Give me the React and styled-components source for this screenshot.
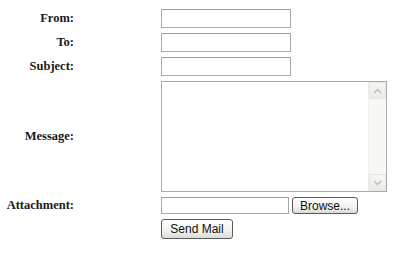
import React from 'react';
import styled, { createGlobalStyle } from 'styled-components';

const GlobalStyle = createGlobalStyle`
  html, body {
    margin: 0;
    padding: 0;
    background: #ffffff;
  }
`;

const Form = styled.form`
  display: grid;
  grid-template-columns: 74px auto;
  column-gap: 87px;
  row-gap: 5px;
  align-items: center;
  align-content: start;
  justify-content: start;
  padding-top: 9px;
  width: 400px;
  height: 267px;
  box-sizing: border-box;
`;

const Label = styled.label`
  font-family: "Liberation Serif", "Times New Roman", serif;
  font-weight: bold;
  font-size: 12.5px;
  color: #1a1a1a;
  text-align: right;
  white-space: nowrap;
`;

const Field = styled.div`
  display: flex;
  align-items: center;
  gap: 3px;
`;

const TextInput = styled.input`
  box-sizing: border-box;
  width: ${({ $w }) => $w || 130}px;
  height: ${({ $h }) => $h || 19}px;
  margin: 0;
  padding: 0 2px;
  border: 1px solid #a9a9a9;
  border-top-color: #9c9c9c;
  background: #fff;
  font-family: "Liberation Sans", Arial, sans-serif;
  font-size: 12px;
  outline: none;
`;

const MessageBox = styled.div`
  box-sizing: border-box;
  width: 226px;
  height: 111px;
  border: 1px solid #a5acb2;
  display: flex;
  background: #fff;
`;

const MessageArea = styled.textarea`
  flex: 1;
  border: none;
  margin: 0;
  padding: 2px;
  resize: none;
  outline: none;
  overflow: hidden;
  font-family: "Liberation Mono", monospace;
  font-size: 12px;
`;

const ScrollBar = styled.div`
  width: 17px;
  display: flex;
  flex-direction: column;
  justify-content: space-between;
  background: #f7f7f3;
  border-left: 1px solid #f0f0ea;
`;

const ArrowBtn = styled.div`
  height: 17px;
  display: flex;
  align-items: center;
  justify-content: center;
  background: linear-gradient(#f6f6f3, #ebebe6);
  border: 1px solid #e6e6e0;
  box-sizing: border-box;
  border-radius: 2px;
`;

const Button = styled.button`
  box-sizing: border-box;
  width: ${({ $w }) => $w}px;
  height: ${({ $h }) => $h}px;
  margin: 0;
  padding: 0;
  border: 1px solid #5a5a5a;
  border-radius: 3px;
  background: linear-gradient(#ffffff, #f2f2ee 60%, #dcdcd6);
  font-family: "Liberation Sans", Arial, sans-serif;
  font-size: 12px;
  color: #111;
  cursor: pointer;
`;

const Chevron = ({ up }) => (
  <svg width="9" height="6" viewBox="0 0 9 6">
    <path
      d={up ? 'M1 5 L4.5 1.5 L8 5' : 'M1 1 L4.5 4.5 L8 1'}
      fill="none"
      stroke="#b8bdb0"
      strokeWidth="1.3"
    />
  </svg>
);

export default function App() {
  return (
    <>
      <GlobalStyle />
      <Form onSubmit={(e) => e.preventDefault()}>
        <Label>From:</Label>
        <Field><TextInput type="text" /></Field>

        <Label>To:</Label>
        <Field><TextInput type="text" /></Field>

        <Label>Subject:</Label>
        <Field><TextInput type="text" /></Field>

        <Label>Message:</Label>
        <Field>
          <MessageBox>
            <MessageArea />
            <ScrollBar>
              <ArrowBtn><Chevron up /></ArrowBtn>
              <ArrowBtn><Chevron /></ArrowBtn>
            </ScrollBar>
          </MessageBox>
        </Field>

        <Label>Attachment:</Label>
        <Field>
          <TextInput type="text" $w={128} $h={17} />
          <Button type="button" $w={66} $h={17}>Browse...</Button>
        </Field>

        <span />
        <Field>
          <Button type="submit" $w={72} $h={20}>Send Mail</Button>
        </Field>
      </Form>
    </>
  );
}
